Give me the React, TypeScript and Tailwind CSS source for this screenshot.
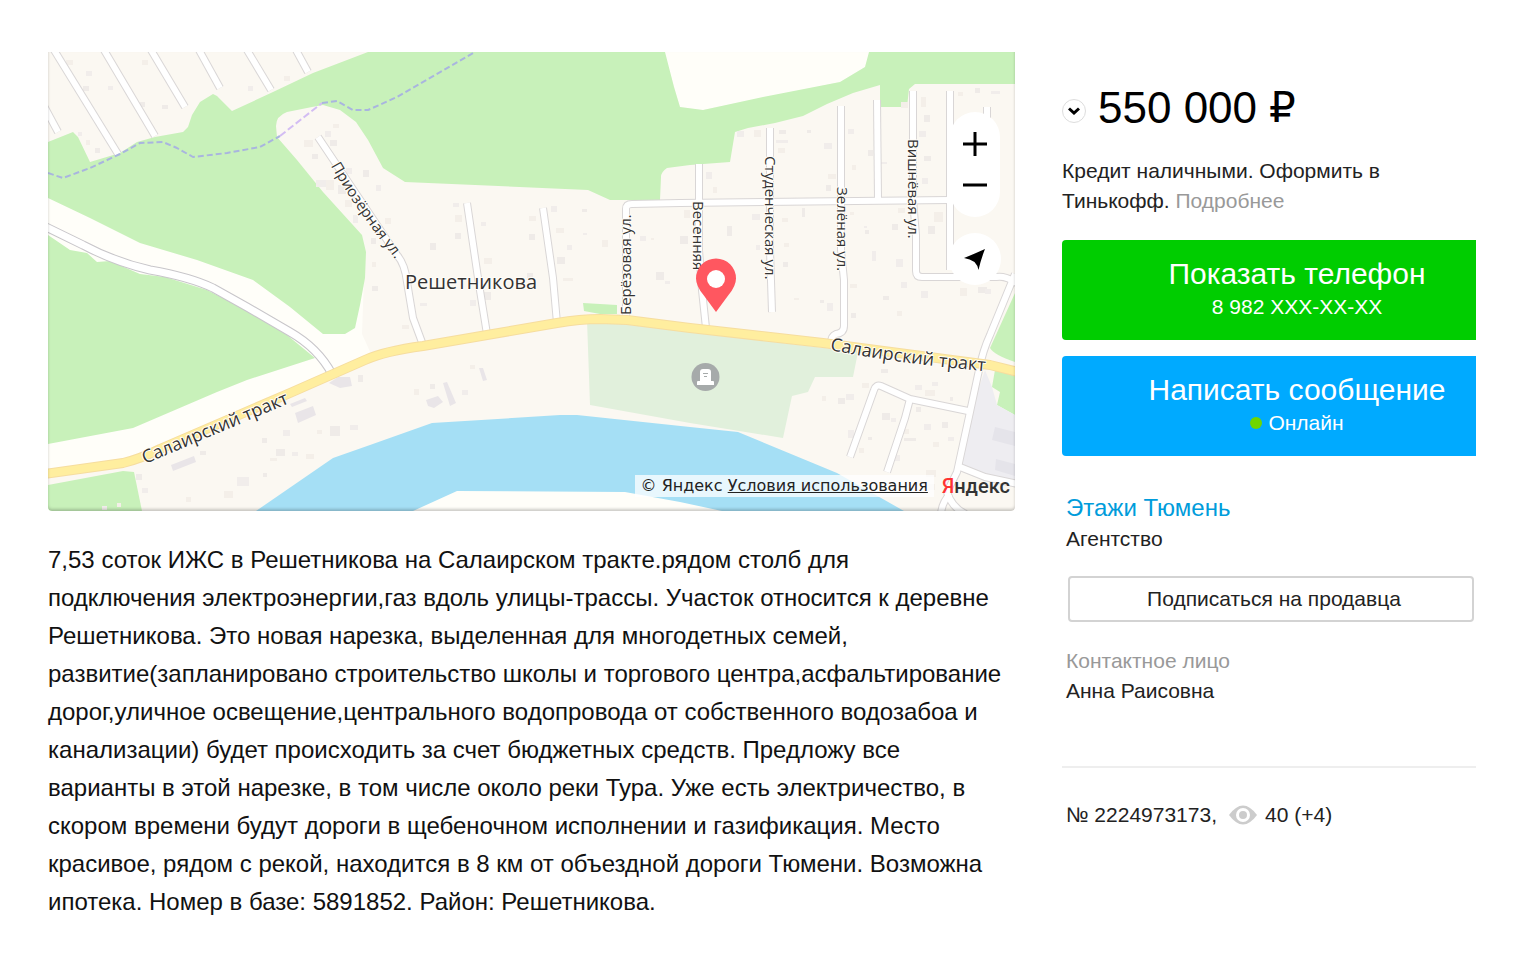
import { useState } from "react";
import { clsx } from "clsx";

// centre lines of the minor streets
const streets = [
  "M44 106 L58 132",
  "M54 50 L118 154",
  "M104 50 L155 136",
  "M151 50 L185 107",
  "M199 50 L220 88",
  "M247 50 L271 90",
  "M296 50 L308 72",
  "M318 137 L397 255 Q405 264 407 282 L413 318 L423 345",
  "M467 203 L478 278 L487 334",
  "M543 208 L553 278 L557 323",
  "M626 320 V209 Q626 204 632 204 L680 203 L950 200",
  "M699 164 V250 L702 290 L706 328",
  "M770 128 V250 L772 312",
  "M841 106 V250 L844 280 V326 Q844 333 836 334 Q831 336 831 343",
  "M877 100 L878 200",
  "M913 91 V200 L916 235 V271 Q916 277 922 277 H996 Q1006 275 1018 284",
  "M950 91 V270",
  "M987 107 V130",
  "M1015 274 L990 335 Q983 350 979 370 L970 412 L957 472 L947 492",
  "M968 411 L910 399 L881 386 Q876 384 874 390 L850 457",
  "M910 399 L905 418 L887 472",
  "M960 467 L985 477 L1018 484",
  "M947 492 Q952 508 966 514",
  "M950 494 Q942 502 941 514",
];

const mainStreet =
  "M44 226 L83 245 Q115 262 150 270 Q190 277 213 288 L247 307 L290 332 Q318 348 332 374";

const highway =
  "M44 474 L123 463 Q140 459 160 449 L290 393 L365 360 Q385 351 423 346 L487 335 L557 323 Q580 319 600 319 L627 320 L690 328 L823 343 L990 365 L1018 372";

// x, y, width, height
const houses = [
  [66, 60, 7, 5], [83, 86, 6, 5], [108, 86, 5, 4], [142, 60, 6, 5], [162, 105, 6, 4],
  [78, 132, 4, 4], [86, 140, 4, 5], [95, 148, 5, 5], [248, 86, 5, 5], [284, 76, 6, 5],
  [140, 102, 5, 5], [86, 71, 6, 5], [304, 140, 9, 7], [312, 154, 6, 5], [325, 131, 6, 6],
  [333, 124, 6, 4], [330, 140, 7, 6], [316, 180, 12, 7], [326, 180, 8, 10], [338, 185, 8, 9],
  [346, 168, 6, 6], [345, 200, 7, 7], [363, 170, 6, 7], [376, 185, 5, 6], [385, 218, 6, 6],
  [371, 238, 5, 6], [353, 215, 5, 8], [372, 262, 4, 5], [372, 286, 6, 5], [420, 303, 7, 3],
  [402, 325, 7, 4], [430, 243, 6, 7], [453, 203, 6, 4], [455, 215, 7, 7], [455, 233, 6, 6],
  [481, 222, 5, 4], [484, 258, 8, 6], [482, 292, 9, 8], [470, 300, 6, 6], [529, 216, 7, 5],
  [529, 234, 6, 6], [551, 206, 6, 6], [556, 228, 8, 5], [557, 257, 8, 7], [567, 245, 5, 5],
  [563, 278, 10, 3], [582, 209, 5, 3], [583, 233, 4, 2], [602, 240, 6, 7], [527, 273, 6, 6],
  [640, 236, 6, 5], [651, 238, 3, 2], [656, 272, 8, 8], [665, 281, 5, 3], [684, 210, 6, 8],
  [680, 236, 8, 8], [737, 131, 7, 6], [754, 130, 7, 7], [779, 130, 7, 4], [776, 140, 12, 3],
  [778, 148, 7, 5], [807, 130, 4, 3], [706, 172, 6, 7], [713, 187, 4, 6], [727, 226, 5, 10],
  [752, 214, 8, 6], [782, 218, 6, 4], [802, 208, 3, 9], [756, 245, 4, 5], [784, 243, 5, 4],
  [783, 262, 5, 5], [824, 143, 8, 6], [828, 174, 8, 5], [826, 185, 5, 6], [848, 129, 6, 5],
  [852, 165, 4, 5], [868, 150, 5, 6], [881, 162, 6, 2], [921, 97, 5, 10], [924, 115, 6, 7],
  [919, 131, 7, 6], [958, 92, 5, 4], [975, 88, 5, 5], [991, 91, 9, 3], [901, 102, 7, 6],
  [924, 156, 7, 5], [922, 178, 6, 6], [898, 208, 7, 5], [892, 224, 6, 6], [896, 259, 7, 8],
  [934, 212, 9, 10], [928, 226, 7, 8], [864, 226, 3, 2], [850, 212, 4, 3], [865, 230, 4, 4],
  [872, 251, 4, 10], [850, 284, 7, 4], [883, 296, 6, 4], [921, 291, 7, 7], [897, 311, 5, 5],
  [851, 313, 5, 5], [827, 303, 6, 8], [794, 298, 5, 2], [820, 300, 4, 3], [901, 282, 6, 6],
  [960, 288, 7, 8], [978, 287, 9, 6], [985, 289, 6, 5], [822, 396, 4, 5], [838, 398, 7, 6],
  [846, 394, 8, 6], [862, 383, 7, 5], [881, 369, 7, 4], [915, 385, 7, 5], [925, 390, 10, 6],
  [882, 413, 8, 7], [891, 418, 5, 4], [904, 429, 5, 5], [868, 437, 4, 3], [848, 430, 6, 8],
  [859, 448, 5, 5], [916, 407, 5, 5], [924, 424, 7, 6], [933, 442, 6, 5], [904, 438, 12, 3],
  [893, 455, 7, 6], [926, 470, 10, 7], [942, 422, 6, 6], [948, 437, 6, 4], [928, 484, 7, 6],
  [950, 397, 3, 4], [932, 382, 6, 4], [414, 389, 5, 6], [430, 384, 5, 5], [462, 390, 6, 5],
  [470, 365, 5, 4], [136, 474, 6, 6], [142, 488, 6, 5], [186, 497, 5, 5], [200, 451, 6, 4],
  [102, 506, 5, 4], [117, 503, 4, 4], [262, 438, 5, 5], [283, 430, 7, 6], [317, 430, 5, 4],
  [330, 426, 10, 10], [350, 425, 8, 5], [270, 458, 7, 3], [276, 449, 9, 7], [292, 452, 6, 4],
  [306, 454, 8, 5], [263, 473, 4, 4], [237, 477, 12, 9], [224, 491, 9, 7], [358, 375, 5, 7],
];

const shades = ["fill-[#f4efe9]", "fill-[#efebe8]", "fill-[#f1edeb]"];

function Pin() {
  return (
    <g>
      <path
        d="M716 312 L703.500 295 Q696 286 696 278.500 A20 20 0 0 1 736 278.500 Q736 286 728.500 295 Z"
        fill="#ff5760"
      />
      <circle cx="716" cy="279" r="9" fill="#fff" />
    </g>
  );
}

function CemeteryMark() {
  return (
    <g>
      <circle cx="705.500" cy="377" r="14" fill="#a6aaaa" />
      <path
        d="M697 385 V382 Q697 381 698 381 H700 V372 Q700 369 703 369 H708 Q711 369 711 372 V381 H713 Q714 381 714 382 V385 Z"
        fill="#fff"
      />
      <path d="M703 373.500 H708 M704 376.500 H707" stroke="#a6aaaa" strokeWidth="1" />
    </g>
  );
}

function MapDrawing() {
  return (
    <svg viewBox="48 52 967 459" className="block h-auto w-full" role="img" aria-label="Карта: Решетникова">
      <rect x="48" y="52" width="967" height="459" fill="#fbf8f2" />

      {/* open ground */}
      <path d="M48 190 L365 250 L362 334 L372 356 L330 376 L140 456 L48 474 Z" fill="#fffef9" />
      <path d="M664 52 L680 107 L703 110 L840 82 L865 67 L870 52 Z" fill="#fffef9" />

      {/* woods */}
      <g fill="#c8f1ba">
        <path d="M48 142 L73 132 L78 137 L90 162 L120 153 L137 142 L155 137 L183 132 L188 127 L192 115 L200 102 L213 94 L217 96 L232 111 L273 92 L313 73 L368 52 H665 L674 87 L680 107 L703 110 L763 97 L840 82 L865 67 L869 52 H1015 V84 H915 L909 89 L907 107 H880 V85 L853 93 L827 104 L803 116 L775 123 L748 128 L735 132 L730 162 L690 165 L667 168 Q661 172 661 177 L660 200 H610 L588 190 L405 182 L383 168 L368 140 L356 122 L340 110 L323 105 L312 107 L287 112 Q276 116 276 126 L277 137 L297 160 L323 192 L362 235 L366 252 L365 278 L360 305 L355 328 L345 334 H323 L290 307 L253 280 L197 260 L140 243 L90 218 L48 198 Z" />
        <path d="M48 235 L70 250 L87 253 L97 262 L110 261 L140 274 L165 277 L207 290 L240 307 L287 335 L315 358 L247 380 L217 392 L133 428 L48 444 Z" />
        <path d="M48 485 L123 471 L134 472 L142 511 H48 Z" />
        <path d="M583 303 L617 305 V314 L600 314 L584 311 Z" />
        <path d="M1015 293 L990 348 Q994 355 1015 362 Z" />
        <path d="M995 370 L1015 376 V415 L997 405 L1000 392 L992 387 Z" />
      </g>

      {/* cemetery, industrial block, river */}
      <path
        d="M587 320 L690 332 L858 352 L853 377 H815 L808 392 L792 396 L783 438 L690 423 L590 405 Z"
        fill="#e1f0dc"
      />
      <path d="M985 370 L992 387 L997 405 L1015 415 V486 L960 467 L972 408 Z" fill="#eeedf1" />
      <path d="M995 427 L1015 432 V446 L992 440 Z M996 459 L1015 464 V476 L995 470 Z" fill="#e5e4ea" />
      <path
        d="M256 511 L333 458 L370 445 L432 423 L560 415 H577 L690 427 L738 432 L837 473 L904 511 Z"
        fill="#a5dff5"
      />
      <path d="M413 511 L457 491 L625 492 L680 502 L722 511 Z" fill="#fffef9" />

      {houses.map(([x, y, w, h], i) => (
        <rect key={i} x={x} y={y} width={w} height={h} className={shades[i % 3]} />
      ))}
      <g fill="#e9e5e8">
        <path d="M171 465 L194 456 L196 462 L173 471 Z" />
        <path d="M290 404 L305 398 L307 401 L292 407 Z" />
        <path d="M295 413 L313 406 L316 415 L298 423 Z" />
        <path d="M329 383 L338 377 L350 377 L352 386 L340 388 Z" />
        <path d="M426 400 L438 396 L443 402 L434 408 L428 406 Z" />
        <path d="M443 383 L447 382 L456 403 L450 406 Z" />
        <path d="M479 368 L483 368 L487 380 L483 381 Z" />
      </g>

      {/* roads: casing first, then the white body */}
      <g fill="none" strokeLinejoin="round">
        {streets.map((d) => (
          <path key={d} d={d} stroke="#d9d6d6" strokeWidth="8" />
        ))}
        <path d={mainStreet} stroke="#c8c6ca" strokeWidth="9" />
        {streets.map((d) => (
          <path key={d} d={d} stroke="#fff" strokeWidth="6" />
        ))}
        <path d={mainStreet} stroke="#fff" strokeWidth="7" />
        <path d={highway} stroke="#f6dd9f" strokeWidth="10" />
        <path d={highway} stroke="#ffee9f" strokeWidth="8" />
        <path
          d="M48 173 L63 178 L90 168 L120 154 L140 143 L163 142 L177 148 L193 157 L227 153 L260 147 L280 136"
          stroke="#a9b5df"
          strokeWidth="2"
          strokeDasharray="6 3"
        />
        <path d="M280 136 L322 103" stroke="#d3bdf3" strokeWidth="2" strokeDasharray="7 3" />
        <path d="M322 103 L337 101 L353 110 L368 110 L397 97 L475 52" stroke="#a9b5df" strokeWidth="2" strokeDasharray="6 3" />
      </g>

      {/* labels */}
      <defs>
        <path id="label-priozernaya" d="M331 166 Q352 204 396 260 L400 266" />
        <path id="label-tract-west" d="M145 464 L292 402" />
        <path id="label-tract-east" d="M830 350 Q900 364 995 372" />
      </defs>
      <g
        className="fill-[#333] stroke-[#fffdf8] font-['Open_Sans','Noto_Sans',sans-serif] text-[15px]"
        strokeWidth="2"
        paintOrder="stroke"
        strokeLinejoin="round"
      >
        <text>
          <textPath href="#label-priozernaya">Приозёрная ул.</textPath>
        </text>
        <text className="text-[18px]">
          <textPath href="#label-tract-west">Салаирский тракт</textPath>
        </text>
        <text className="text-[18px]">
          <textPath href="#label-tract-east">Салаирский тракт</textPath>
        </text>
        <text x="405" y="289" className="text-[20px]">Решетникова</text>
        <text transform="translate(631 315) rotate(-90)">Берёзовая ул.</text>
        <text transform="translate(693 201) rotate(90)">Весенняя</text>
        <text transform="translate(765 156) rotate(90)">Студенческая ул.</text>
        <text transform="translate(837 187) rotate(90)">Зелёная ул.</text>
        <text transform="translate(908 139) rotate(90)">Вишнёвая ул.</text>
      </g>

      <CemeteryMark />
      <Pin />
    </svg>
  );
}

function MapPanel() {
  return (
    <div className="relative overflow-hidden rounded-b-sm">
      <MapDrawing />
      <div className="pointer-events-none absolute inset-0 rounded-b-sm shadow-[inset_0_-2px_3px_rgba(0,0,0,0.2)]" />
      <div className="absolute top-[60px] right-[14px] flex flex-col items-center gap-4">
        <div className="flex h-[105px] w-[50px] flex-col rounded-full bg-white py-[11px]">
          <button type="button" aria-label="Приблизить" className="flex flex-1 items-center justify-center">
            <svg width="24" height="24" viewBox="0 0 24 24" stroke="#000" strokeWidth="3">
              <path d="M0 12 H24 M12 0 V24" />
            </svg>
          </button>
          <button type="button" aria-label="Отдалить" className="flex flex-1 items-center justify-center">
            <svg width="24" height="24" viewBox="0 0 24 24" stroke="#000" strokeWidth="3">
              <path d="M0 12 H24" />
            </svg>
          </button>
        </div>
        <button
          type="button"
          aria-label="Моё местоположение"
          className="flex h-[52px] w-[52px] items-center justify-center rounded-full bg-white"
        >
          <svg width="22" height="22" viewBox="0 0 22 22" fill="#000">
            <path d="M21 1 Q17 11 14.500 22 Q13.500 17 10.500 14 Q6 11 0 10 Q10 6 21 1 Z" />
          </svg>
        </button>
      </div>
      <div className="absolute right-[5px] bottom-[14px] flex items-center gap-2">
        <p className="bg-white/75 px-1.5 font-['DejaVu_Sans',sans-serif] text-base leading-[22px] text-[#222]">
          © Яндекс{" "}
          <a href="#terms" className="underline">
            Условия использования
          </a>
        </p>
        <a
          href="#yandex"
          className="font-[Roboto,'Open_Sans',sans-serif] text-xl leading-[22px] font-medium text-[#333]"
        >
          <span className="text-[#f33]">Я</span>ндекс
        </a>
      </div>
    </div>
  );
}

interface ActionButtonProps {
  title: string;
  subtitle: string;
  color: string;
  online?: boolean;
}

const ActionButton = ({ title, subtitle, color, online }: ActionButtonProps) => (
  <button
    type="button"
    className={clsx("flex h-[100px] w-full flex-col items-center rounded-l pt-4 pl-14 text-white", color)}
  >
    <span className="text-[30px] leading-9">{title}</span>
    <span className="flex items-center gap-1.5 leading-[30px]">
      {online && <span className="h-3 w-3 rounded-full bg-[#6fd600]" />}
      {subtitle}
    </span>
  </button>
);

function SellerPanel() {
  const [phone] = useState("8 982 XXX-XX-XX");

  return (
    <aside className="w-[414px] shrink-0 pt-7 text-[21px] leading-[30px] text-[#222]">
      <div className="flex items-center gap-3">
        <button
          type="button"
          aria-label="Подробнее о цене"
          className="mt-1.5 flex h-6 w-6 items-center justify-center rounded-full border border-[#ddd]"
        >
          <svg width="12" height="8" viewBox="0 0 12 8" fill="none" stroke="#000" strokeWidth="3">
            <path d="M1 1.500 L6 6 L11 1.500" />
          </svg>
        </button>
        <p className="flex items-center gap-3 text-[44px] leading-[56px] text-black">
          <span>550 000</span>
          <span className="font-['DejaVu_Sans',sans-serif] text-[42px]">₽</span>
        </p>
      </div>

      <p className="mt-5">
        Кредит наличными. Оформить в
        <br />
        Тинькофф.{" "}
        <a href="#credit" className="text-[#999]">
          Подробнее
        </a>
      </p>

      <div className="mt-6 flex flex-col gap-4">
        <ActionButton title="Показать телефон" subtitle={phone} color="bg-[#00cd00]" />
        <ActionButton title="Написать сообщение" subtitle="Онлайн" color="bg-[#00aaff]" online />
      </div>

      <div className="mt-9 pl-1">
        <a href="#seller" className="block text-2xl leading-8 text-[#009cdb]">
          Этажи Тюмень
        </a>
        <p>Агентство</p>
      </div>

      <button
        type="button"
        className="mt-[22px] ml-1.5 h-[46px] w-[406px] rounded border-2 border-[#d3d3d3] pl-1.5"
      >
        Подписаться на продавца
      </button>

      <div className="mt-6 pl-1">
        <p className="text-[#999]">Контактное лицо</p>
        <p>Анна Раисовна</p>
      </div>

      <hr className="mt-[60px] border-t-2 border-[#eee]" />

      <div className="mt-8 flex items-center gap-2 pl-1">
        <span>№ 2224973173,</span>
        <svg width="28" height="20" viewBox="0 0 28 20" className="ml-1">
          <path d="M0 10 Q14 -9 28 10 Q14 29 0 10 Z" fill="#ccc" />
          <circle cx="14" cy="10" r="7" fill="#fff" />
          <circle cx="14" cy="10" r="4" fill="#ccc" />
        </svg>
        <span>40 (+4)</span>
      </div>
    </aside>
  );
}

const description = [
  "7,53 соток ИЖС в Решетникова на Салаирском тракте.рядом столб для",
  "подключения электроэнергии,газ вдоль улицы-трассы. Участок относится к деревне",
  "Решетникова. Это новая нарезка, выделенная для многодетных семей,",
  "развитие(запланировано строительство школы и торгового центра,асфальтирование",
  "дорог,уличное освещение,центрального водопровода от собственного водозабоа и",
  "канализации) будет происходить за счет бюджетных средств. Предложу все",
  "варианты в этой нарезке, в том числе около реки Тура. Уже есть электричество, в",
  "скором времени будут дороги в щебеночном исполнении и газификация. Место",
  "красивое, рядом с рекой, находится в 8 км от объездной дороги Тюмени. Возможна",
  "ипотека. Номер в базе: 5891852. Район: Решетникова.",
];

export default function App() {
  return (
    <div className="flex gap-[47px] bg-white pt-[52px] pr-11 pb-12 pl-12 font-['Liberation_Sans',Arial,sans-serif]">
      <main className="min-w-0 flex-1">
        <MapPanel />
        <p className="mt-[30px] text-2xl leading-[38px] whitespace-pre-line text-[#111]">
          {description.join("\n")}
        </p>
      </main>
      <SellerPanel />
    </div>
  );
}
